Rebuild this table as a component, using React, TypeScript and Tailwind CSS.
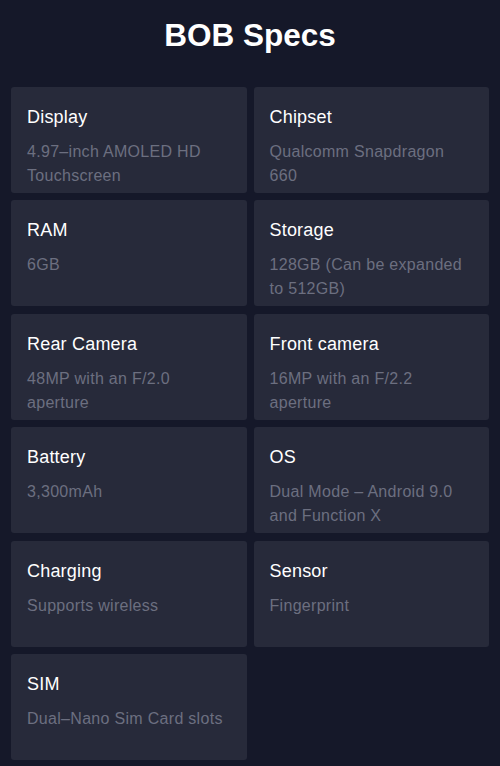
const specs = [
  { label: "Display", value: "4.97–inch AMOLED HD Touchscreen" },
  { label: "Chipset", value: "Qualcomm Snapdragon 660" },
  { label: "RAM", value: "6GB" },
  { label: "Storage", value: "128GB (Can be expanded to 512GB)" },
  { label: "Rear Camera", value: "48MP with an F/2.0 aperture" },
  { label: "Front camera", value: "16MP with an F/2.2 aperture" },
  { label: "Battery", value: "3,300mAh" },
  { label: "OS", value: "Dual Mode – Android 9.0 and Function X" },
  { label: "Charging", value: "Supports wireless" },
  { label: "Sensor", value: "Fingerprint" },
  { label: "SIM", value: "Dual–Nano Sim Card slots" },
];

export default function App() {
  return (
    <div
      className="min-h-[766px] w-full bg-[#151829] px-[11px] pt-[15px]"
      style={{ fontFamily: '"Liberation Sans", Arial, sans-serif' }}
    >
      <h1 className="text-center text-[31.5px] font-bold leading-[40px] text-white">BOB Specs</h1>

      <div className="mt-[32px] grid grid-cols-2 gap-x-[7px] gap-y-[7.4px]">
        {specs.map((s) => (
          <div key={s.label} className="h-[106px] rounded-[3px] bg-[#272a3a] px-4 pt-[18px]">
            <div className="text-[18px] leading-[24px] tracking-[0.2px] text-white">{s.label}</div>
            <div className="mt-[11px] text-[16px] leading-[24px] tracking-[0.3px] text-[#6c6f80]">
              {s.value}
            </div>
          </div>
        ))}
      </div>
    </div>
  );
}
